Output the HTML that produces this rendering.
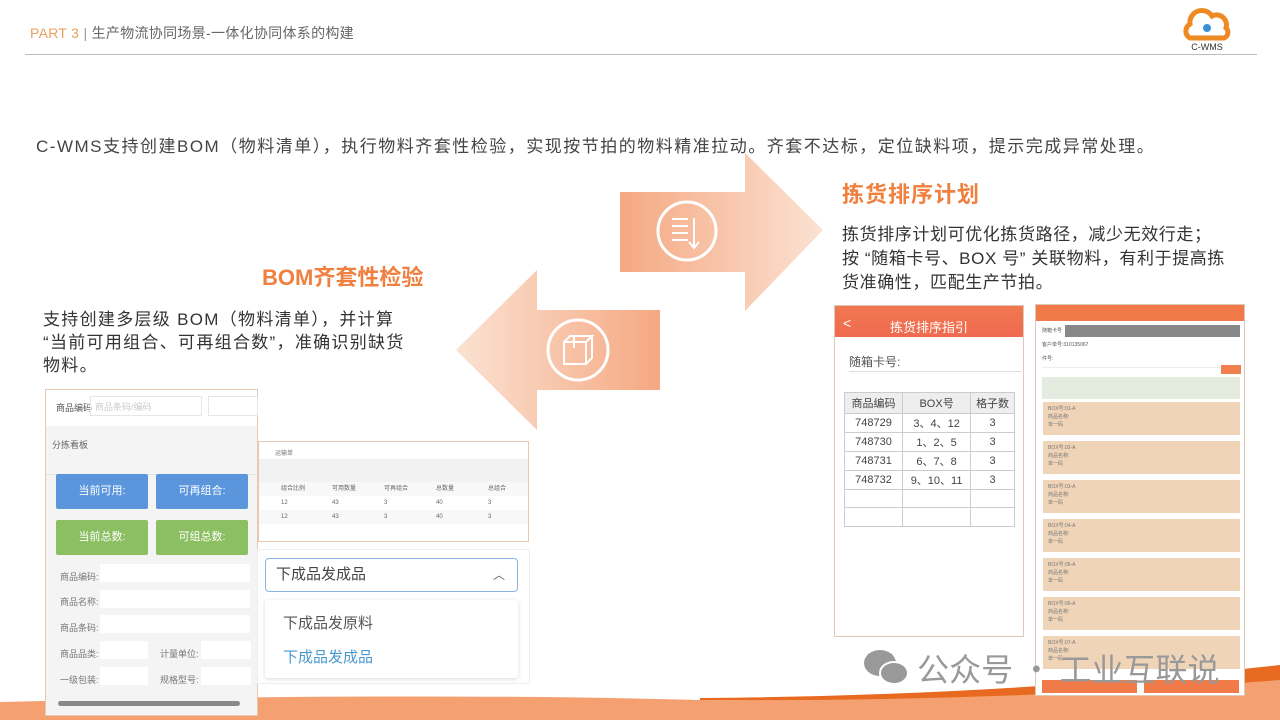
<!DOCTYPE html><html><head><meta charset="utf-8"><style>
*{margin:0;padding:0;box-sizing:border-box}
body{width:1280px;height:720px;overflow:hidden;background:#fff;font-family:"Liberation Sans","Noto Sans CJK SC",sans-serif;position:relative;color:#333}
.a{position:absolute}
.t{font-size:9px;color:#777}
.c{height:33px;background:#f0d4b8;margin-bottom:6px;font-size:5px;color:#777;padding:3px 5px;line-height:8px}
</style></head><body>
<div class="a" style="left:30px;top:23px;font-size:14px;color:#666;letter-spacing:0.3px"><span style="color:#e8a060">PART 3</span> <span style="color:#999">|</span> 生产物流协同场景-一体化协同体系的构建</div>
<div class="a" style="left:25px;top:54px;width:1232px;height:1px;background:#bbb"></div>
<svg class="a" style="left:1180px;top:6px" width="54" height="46" viewBox="0 0 54 46"><path d="M10 32 A8 8 0 0 1 10 18 A12 12 0 0 1 32 10 A10 10 0 0 1 46 22 A6 6 0 0 1 44 32 Z" fill="none" stroke="#ee8a22" stroke-width="5"/><circle cx="27" cy="22" r="4" fill="#3a8fd8"/><text x="27" y="44" font-size="9" text-anchor="middle" fill="#333" font-family="Liberation Sans">C-WMS</text></svg>
<div class="a" style="left:36px;top:132px;font-size:17px;color:#444;letter-spacing:1.5px;white-space:nowrap">C-WMS支持创建BOM（物料清单），执行物料齐套性检验，实现按节拍的物料精准拉动。齐套不达标，定位缺料项，提示完成异常处理。</div>
<svg class="a" style="left:450px;top:150px" width="380" height="285">
<defs><linearGradient id="g1" x1="0" x2="1"><stop offset="0" stop-color="#f5a882"/><stop offset="1" stop-color="#fbe2d2"/></linearGradient><linearGradient id="g2" x1="1" x2="0"><stop offset="0" stop-color="#f5a882"/><stop offset="1" stop-color="#fbe2d2"/></linearGradient></defs>
<polygon points="170,42 295,42 295,3 373,80 295,161 295,122 170,122" fill="url(#g1)"/>
<polygon points="210,160 87,160 87,120 6,200 87,280 87,240 210,240" fill="url(#g2)"/>
<circle cx="237" cy="81" r="29" fill="none" stroke="#fff" stroke-width="3"/>
<path d="M222 69h16M222 76h16M222 83h16M222 90h16M244 68v30M239 92l5 6 5-6" stroke="#fff" stroke-width="2" fill="none"/>
<circle cx="128" cy="200" r="30" fill="none" stroke="#fff" stroke-width="3"/>
<path d="M114 192h22v22h-22z M114 192l6-6h22l-6 6 M136 214l6-6v-22 M124 186v12" stroke="#fff" stroke-width="2" fill="none"/>
</svg>
<div class="a" style="left:842px;top:177px;font-size:22px;font-weight:bold;color:#f08040;letter-spacing:1px">拣货排序计划</div>
<div class="a" style="left:842px;top:223px;font-size:17px;line-height:24px;color:#333;width:385px;letter-spacing:0.6px">拣货排序计划可优化拣货路径，减少无效行走；<br>按 “随箱卡号、BOX 号” 关联物料，有利于提高拣货准确性，匹配生产节拍。</div>
<div class="a" style="left:262px;top:260px;font-size:22px;font-weight:bold;color:#f08040">BOM齐套性检验</div>
<div class="a" style="left:43px;top:308px;font-size:17px;line-height:23px;color:#333;width:420px;letter-spacing:1.3px;white-space:nowrap">支持创建多层级 BOM（物料清单），并计算<br>“当前可用组合、可再组合数”，准确识别缺货<br>物料。</div>
<!-- bottom band -->
<svg class="a" style="left:0;top:640px" width="1280" height="80"><path d="M0 62 Q400 52 700 60 Q1000 62 1280 30 L1280 80 L0 80Z" fill="#f5a070"/><path d="M700 58 Q1000 56 1280 25 L1280 40 Q1000 62 700 60Z" fill="#e86a20"/></svg>
<!-- left panel -->
<div class="a" style="left:45px;top:389px;width:213px;height:327px;background:#f4f4f4;border:1px solid #e8c8b0">
<div style="background:#fff;height:36px;position:relative"><span class="t a" style="left:10px;top:11px;color:#555">商品编码</span><div class="a" style="left:44px;top:6px;width:112px;height:20px;border:1px solid #e6e6e6" ><span class="t" style="color:#ccc;padding-left:4px;line-height:18px">商品条码/编码</span></div><div class="a" style="left:162px;top:6px;width:50px;height:20px;border:1px solid #e6e6e6"></div></div>
<div class="t a" style="left:6px;top:48px;color:#666">分拣看板</div>
<div class="a" style="left:0;top:84px;width:213px;height:1px;background:#e4e4e4"></div>
<div class="a" style="left:10px;top:84px;width:92px;height:35px;background:#5b96dc;color:#fff;font-size:11px;text-align:center;line-height:35px;border-radius:2px">当前可用:</div>
<div class="a" style="left:110px;top:84px;width:92px;height:35px;background:#5b96dc;color:#fff;font-size:11px;text-align:center;line-height:35px;border-radius:2px">可再组合:</div>
<div class="a" style="left:10px;top:130px;width:92px;height:35px;background:#8cbf62;color:#fff;font-size:11px;text-align:center;line-height:35px;border-radius:2px">当前总数:</div>
<div class="a" style="left:110px;top:130px;width:92px;height:35px;background:#8cbf62;color:#fff;font-size:11px;text-align:center;line-height:35px;border-radius:2px">可组总数:</div>
<div class="t a" style="left:14px;top:180px">商品编码:</div><div class="a" style="left:54px;top:174px;width:150px;height:18px;background:#fff"></div>
<div class="t a" style="left:14px;top:205px">商品名称:</div><div class="a" style="left:54px;top:200px;width:150px;height:18px;background:#fff"></div>
<div class="t a" style="left:14px;top:231px">商品条码:</div><div class="a" style="left:54px;top:225px;width:150px;height:18px;background:#fff"></div>
<div class="t a" style="left:14px;top:257px">商品品类:</div><div class="a" style="left:54px;top:251px;width:48px;height:18px;background:#fff"></div>
<div class="t a" style="left:114px;top:257px">计量单位:</div><div class="a" style="left:155px;top:251px;width:50px;height:18px;background:#fff"></div>
<div class="t a" style="left:14px;top:283px">一级包装:</div><div class="a" style="left:54px;top:277px;width:48px;height:18px;background:#fff"></div>
<div class="t a" style="left:114px;top:283px">规格型号:</div><div class="a" style="left:155px;top:277px;width:50px;height:18px;background:#fff"></div>
<div class="a" style="left:12px;top:311px;width:182px;height:5px;background:#888;border-radius:3px"></div>
</div>
<!-- table panel -->
<div class="a" style="left:258px;top:441px;width:271px;height:101px;background:#fff;border:1px solid #e8c8b0">
<div style="height:18px;border-bottom:1px solid #eee"><span class="t" style="font-size:6px;margin-left:16px">运输单</span></div>
<div style="height:22px;background:#f2f2f2"></div>
<div style="font-size:6px;color:#666;display:flex;padding-left:22px;height:14px;line-height:14px;background:#f8f8f8"><span style="width:51px">组合比例</span><span style="width:52px">可用数量</span><span style="width:52px">可再组合</span><span style="width:52px">总数量</span><span>总组合</span></div>
<div style="font-size:6px;color:#666;display:flex;padding-left:22px;height:14px;line-height:14px"><span style="width:51px">12</span><span style="width:52px">43</span><span style="width:52px">3</span><span style="width:52px">40</span><span>3</span></div>
<div style="font-size:6px;color:#666;display:flex;padding-left:22px;height:14px;line-height:14px;background:#f8f8f8"><span style="width:51px">12</span><span style="width:52px">43</span><span style="width:52px">3</span><span style="width:52px">40</span><span>3</span></div>
</div>
<div class="a" style="left:257px;top:549px;width:273px;height:135px;background:#fff;border:1px solid #eee">
<div class="a" style="left:7px;top:8px;width:253px;height:34px;border:1px solid #8ab4e0;border-radius:4px;font-size:15px;line-height:32px;padding-left:10px;color:#444">下成品发成品<span class="a" style="right:12px;top:0;font-size:12px;color:#666">︿</span></div>
<div class="a" style="left:7px;top:50px;width:253px;height:78px;box-shadow:0 1px 4px rgba(0,0,0,.15);border-radius:3px;background:#fff">
<div class="a" style="left:18px;top:12px;font-size:15px;color:#555">下成品发原料</div>
<div class="a" style="left:18px;top:46px;font-size:15px;color:#4a98d0">下成品发成品</div></div>
</div>
<!-- phone 1 -->
<div class="a" style="left:834px;top:305px;width:190px;height:332px;background:#fff;border:1px solid #e0c8b8">
<div style="height:31px;background:linear-gradient(#f07850,#f06a50);color:#fff;font-size:13px;text-align:center;padding-top:11px;position:relative">拣货排序指引<span class="a" style="left:8px;top:9px;font-size:14px">&lt;</span></div>
<div class="a" style="left:14px;top:47px;font-size:12px;color:#555">随箱卡号:</div>
<div class="a" style="left:14px;top:65px;width:172px;height:1px;background:#ddd"></div>
<table class="a" style="left:9px;top:86px;width:171px;border-collapse:collapse;font-size:11px;color:#444;text-align:center">
<tr style="background:#eee;height:21px"><td style="border:1px solid #ccc">商品编码</td><td style="border:1px solid #ccc">BOX号</td><td style="border:1px solid #ccc">格子数</td></tr>
<tr style="height:19px"><td style="border:1px solid #ccc">748729</td><td style="border:1px solid #ccc">3、4、12</td><td style="border:1px solid #ccc">3</td></tr>
<tr style="height:19px"><td style="border:1px solid #ccc">748730</td><td style="border:1px solid #ccc">1、2、5</td><td style="border:1px solid #ccc">3</td></tr>
<tr style="height:19px"><td style="border:1px solid #ccc">748731</td><td style="border:1px solid #ccc">6、7、8</td><td style="border:1px solid #ccc">3</td></tr>
<tr style="height:19px"><td style="border:1px solid #ccc">748732</td><td style="border:1px solid #ccc">9、10、11</td><td style="border:1px solid #ccc">3</td></tr>
<tr style="height:18px"><td style="border:1px solid #ccc"></td><td style="border:1px solid #ccc"></td><td style="border:1px solid #ccc"></td></tr>
<tr style="height:19px"><td style="border:1px solid #ccc"></td><td style="border:1px solid #ccc"></td><td style="border:1px solid #ccc"></td></tr>
</table></div>
<!-- phone 2 -->
<div class="a" style="left:1035px;top:304px;width:210px;height:392px;background:#fff;border:1px solid #e0c8b8;overflow:hidden">
<div style="height:16px;background:#f07a48"></div>
<div class="a" style="left:29px;top:20px;width:175px;height:12px;background:#888"></div>
<div class="a" style="left:6px;top:22px;font-size:5px;color:#555">随箱卡号</div>
<div class="a" style="left:6px;top:36px;font-size:5px;color:#555">客户单号:310135067</div>
<div class="a" style="left:6px;top:50px;font-size:5px;color:#555">件号:</div>
<div class="a" style="left:6px;top:62px;width:180px;height:1px;background:#eee"></div>
<div class="a" style="left:185px;top:60px;width:20px;height:9px;background:#f08050"></div>
<div class="a" style="left:6px;top:72px;width:198px;height:22px;background:#e4ecdf"></div>
<div style="position:absolute;left:7px;top:97px;width:197px">
<div class="c">BOX号:01-A<br>商品名称:<br>单一码</div><div class="c">BOX号:02-A<br>商品名称:<br>单一码</div><div class="c">BOX号:03-A<br>商品名称:<br>单一码</div><div class="c">BOX号:04-A<br>商品名称:<br>单一码</div><div class="c">BOX号:05-A<br>商品名称:<br>单一码</div><div class="c">BOX号:06-A<br>商品名称:<br>单一码</div><div class="c">BOX号:07-A<br>商品名称:<br>单一码</div></div>
<div class="a" style="left:6px;top:375px;width:95px;height:13px;background:#f07a48"></div>
<div class="a" style="left:108px;top:375px;width:95px;height:13px;background:#f07a48"></div>
</div>
<!-- watermark -->
<div class="a" style="left:862px;top:645px;font-size:32px;color:#999;white-space:nowrap;font-family:'Noto Sans CJK SC',sans-serif">
<svg width="48" height="40" style="vertical-align:-6px" viewBox="0 0 48 40"><ellipse cx="18" cy="16" rx="16" ry="13" fill="#999"/><ellipse cx="32" cy="26" rx="14" ry="11" fill="#999" stroke="#fff" stroke-width="2"/></svg> 公众号 · 工业互联说</div>
</body></html>
